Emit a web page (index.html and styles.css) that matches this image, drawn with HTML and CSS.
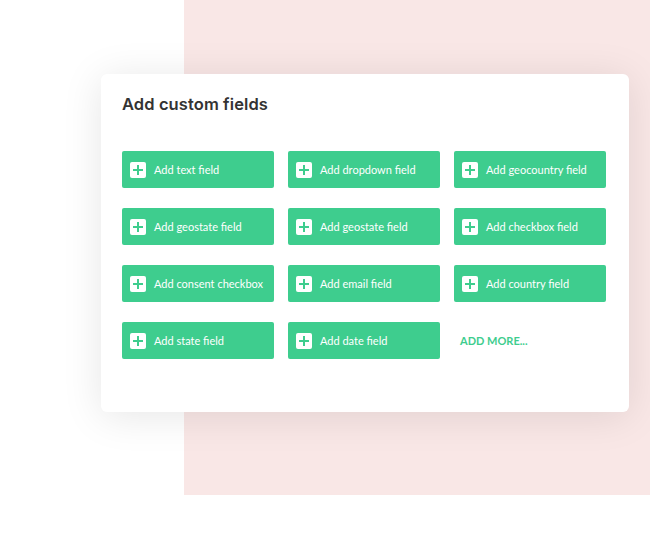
FILE: index.html
```html
<!DOCTYPE html>
<html>
<head>
<meta charset="utf-8">
<link rel="stylesheet" href="styles.css">
</head>
<body>
<div class="stage">
  <div class="pink"></div>
  <div class="card">
    <h1 class="title">Add custom fields</h1>
    <div class="grid">
      <div class="btn"><span class="plus"></span><span class="label">Add text field</span></div>
      <div class="btn"><span class="plus"></span><span class="label">Add dropdown field</span></div>
      <div class="btn"><span class="plus"></span><span class="label">Add geocountry field</span></div>
      <div class="btn"><span class="plus"></span><span class="label">Add geostate field</span></div>
      <div class="btn"><span class="plus"></span><span class="label">Add geostate field</span></div>
      <div class="btn"><span class="plus"></span><span class="label">Add checkbox field</span></div>
      <div class="btn"><span class="plus"></span><span class="label">Add consent checkbox</span></div>
      <div class="btn"><span class="plus"></span><span class="label">Add email field</span></div>
      <div class="btn"><span class="plus"></span><span class="label">Add country field</span></div>
      <div class="btn"><span class="plus"></span><span class="label">Add state field</span></div>
      <div class="btn"><span class="plus"></span><span class="label">Add date field</span></div>
      <div class="more">ADD MORE...</div>
    </div>
  </div>
</div>
</body>
</html>
```

FILE: styles.css
```css
html, body {
  margin: 0;
  padding: 0;
  background: #ffffff;
}
.stage {
  position: relative;
  width: 650px;
  height: 550px;
  overflow: hidden;
}
.pink {
  position: absolute;
  left: 184px;
  top: 0;
  width: 466px;
  height: 495px;
  background: #f9e7e6;
}
.card {
  position: absolute;
  left: 101px;
  top: 74px;
  width: 528px;
  height: 338px;
  box-sizing: border-box;
  padding: 20px 21px 0 21px;
  background: #ffffff;
  border-radius: 6px;
  box-shadow: 0 4px 40px rgba(0, 0, 0, 0.10);
}
.title {
  margin: 0;
  font-family: "Inter", "Open Sans", sans-serif;
  font-weight: 600;
  font-size: 16.5px;
  line-height: 20px;
  color: #333333;
  letter-spacing: 0.1px;
}
.grid {
  margin-top: 37px;
  display: grid;
  grid-template-columns: 152px 152px 152px;
  column-gap: 14px;
  row-gap: 20px;
}
.btn {
  height: 37px;
  background: #3ecd8e;
  border-radius: 2px;
  display: flex;
  align-items: center;
  padding-left: 8px;
}
.plus {
  position: relative;
  width: 16px;
  height: 16px;
  background: #ffffff;
  border-radius: 2px;
  flex: none;
}
.plus::before, .plus::after {
  content: "";
  position: absolute;
  background: #3ecd8e;
}
.plus::before {
  left: 7px;
  top: 3px;
  width: 2px;
  height: 10px;
}
.plus::after {
  left: 3px;
  top: 7px;
  width: 10px;
  height: 2px;
}
.label {
  margin-left: 8px;
  font-family: "Lato", "Open Sans", sans-serif;
  font-size: 11px;
  color: #ffffff;
  white-space: nowrap;
}
.more {
  display: flex;
  align-items: center;
  padding-left: 6px;
  height: 37px;
  font-family: "Lato", "Open Sans", sans-serif;
  font-weight: 700;
  font-size: 11px;
  color: #3ecd8e;
}
```
